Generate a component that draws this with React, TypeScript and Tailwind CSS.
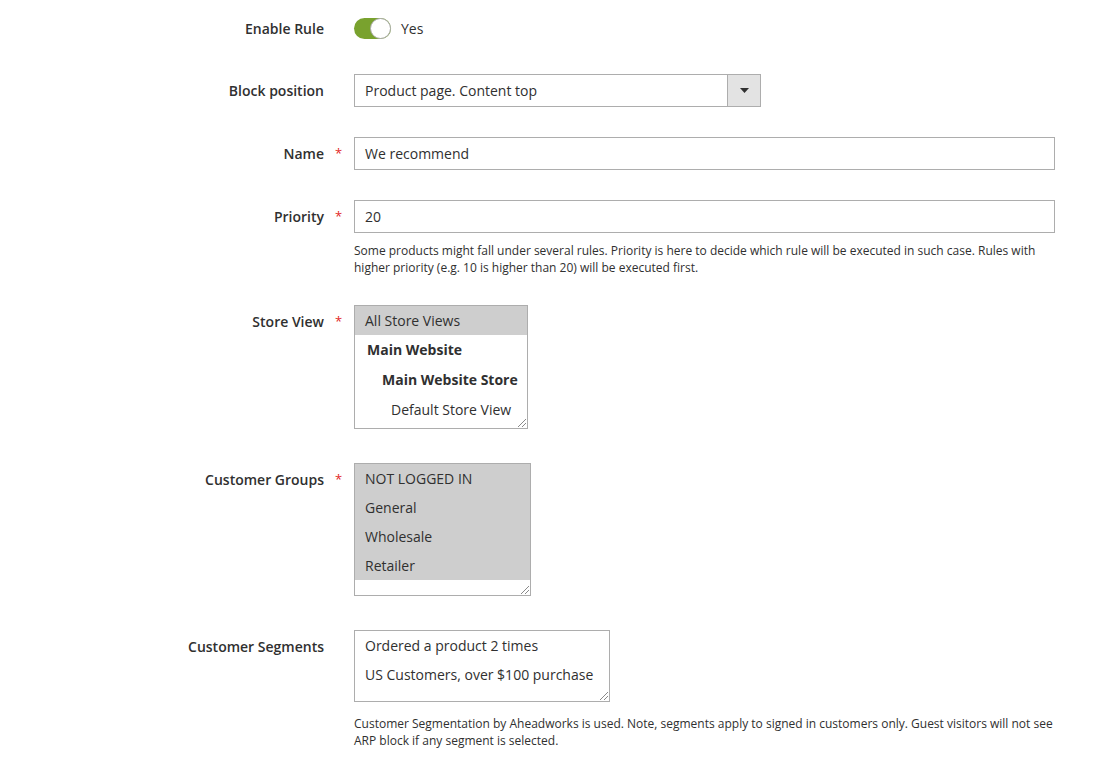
import React from "react";

function Grip() {
  return (
    <svg className="absolute right-[1px] bottom-[1px]" width="9" height="9" viewBox="0 0 9 9">
      <line x1="1" y1="9" x2="9" y2="1" stroke="#8a8a8a" strokeWidth="1" />
      <line x1="5" y1="9" x2="9" y2="5" stroke="#8a8a8a" strokeWidth="1" />
    </svg>
  );
}

function Row({
  label,
  required,
  children,
  className = "",
  center = false,
}: {
  label: string;
  required?: boolean;
  children: React.ReactNode;
  className?: string;
  center?: boolean;
}) {
  return (
    <div className={`flex ${center ? "items-center" : "items-start"} ${className}`}>
      <div className="w-[324px] shrink-0 text-right text-[14px] font-semibold leading-[33px] text-[#303030]">
        {label}
      </div>
      <div className="w-[30px] shrink-0 pl-[11px] text-[13px] leading-[33px] text-[#e22626]">
        {required ? "*" : ""}
      </div>
      <div className="flex-1">{children}</div>
    </div>
  );
}

export default function App() {
  return (
    <div
      className="w-[1113px] h-[761px] bg-white text-[#303030] overflow-hidden"
      style={{ fontFamily: '"Open Sans", "Noto Sans", sans-serif' }}
    >
      <div className="pt-[12px]">
        <Row label="Enable Rule" center>
          <div className="flex items-center">
            <div className="relative h-[21px] w-[37px] rounded-full bg-[#79a22e]">
              <div className="absolute right-0 top-0 h-[21px] w-[21px] rounded-full border border-[#aaaaaa] bg-white" />
            </div>
            <span className="ml-[10px] text-[14px] text-[#303030]">Yes</span>
          </div>
        </Row>

        <Row label="Block position" className="mt-[29px]">
          <div className="flex h-[33px] w-[407px] border border-[#adadad]">
            <div className="flex flex-1 items-center px-[10px] text-[14px]">Product page. Content top</div>
            <div className="flex w-[33px] items-center justify-center border-l border-[#adadad] bg-[#e3e3e3]">
              <svg width="9" height="5" viewBox="0 0 9 5">
                <polygon points="0,0 9,0 4.5,5" fill="#303030" />
              </svg>
            </div>
          </div>
        </Row>

        <Row label="Name" required className="mt-[30px]">
          <div className="flex h-[33px] w-[701px] items-center border border-[#adadad] px-[10px] text-[14px]">
            We recommend
          </div>
        </Row>

        <Row label="Priority" required className="mt-[30px]">
          <div className="flex h-[33px] w-[701px] items-center border border-[#adadad] px-[10px] text-[14px]">
            20
          </div>
          <p className="mt-[9px] w-[701px] text-[12px] leading-[17px] text-[#303030]">
            Some products might fall under several rules. Priority is here to decide which rule will be executed in such case. Rules with higher priority (e.g. 10 is higher than 20) will be executed first.
          </p>
        </Row>

        <Row label="Store View" required className="mt-[29px]">
          <div className="relative h-[124px] w-[174px] border border-[#adadad] text-[14px]">
            <div className="h-[29px] bg-[#cecece] pl-[10px] leading-[29px]">All Store Views</div>
            <div className="h-[30px] pl-[12px] font-bold leading-[30px]">Main Website</div>
            <div className="h-[30px] pl-[27px] font-bold leading-[30px]">Main Website Store</div>
            <div className="h-[30px] pl-[36px] leading-[30px]">Default Store View</div>
            <Grip />
          </div>
        </Row>

        <Row label="Customer Groups" required className="mt-[34px]">
          <div className="relative h-[133px] w-[177px] border border-[#adadad] text-[14px]">
            <div className="bg-[#cecece]">
              <div className="h-[29px] pl-[10px] leading-[29px]">NOT LOGGED IN</div>
              <div className="h-[29px] pl-[10px] leading-[29px]">General</div>
              <div className="h-[29px] pl-[10px] leading-[29px]">Wholesale</div>
              <div className="h-[29px] pl-[10px] leading-[29px]">Retailer</div>
            </div>
            <Grip />
          </div>
        </Row>

        <Row label="Customer Segments" className="mt-[34px]">
          <div className="relative h-[72px] w-[256px] border border-[#adadad] text-[14px]">
            <div className="h-[29px] pl-[10px] leading-[29px]">Ordered a product 2 times</div>
            <div className="h-[29px] pl-[10px] leading-[29px]">US Customers, over $100 purchase</div>
            <Grip />
          </div>
          <p className="mt-[13px] w-[701px] text-[12px] leading-[17px] text-[#303030]">
            Customer Segmentation by Aheadworks is used. Note, segments apply to signed in customers only. Guest visitors will not see ARP block if any segment is selected.
          </p>
        </Row>
      </div>
    </div>
  );
}
